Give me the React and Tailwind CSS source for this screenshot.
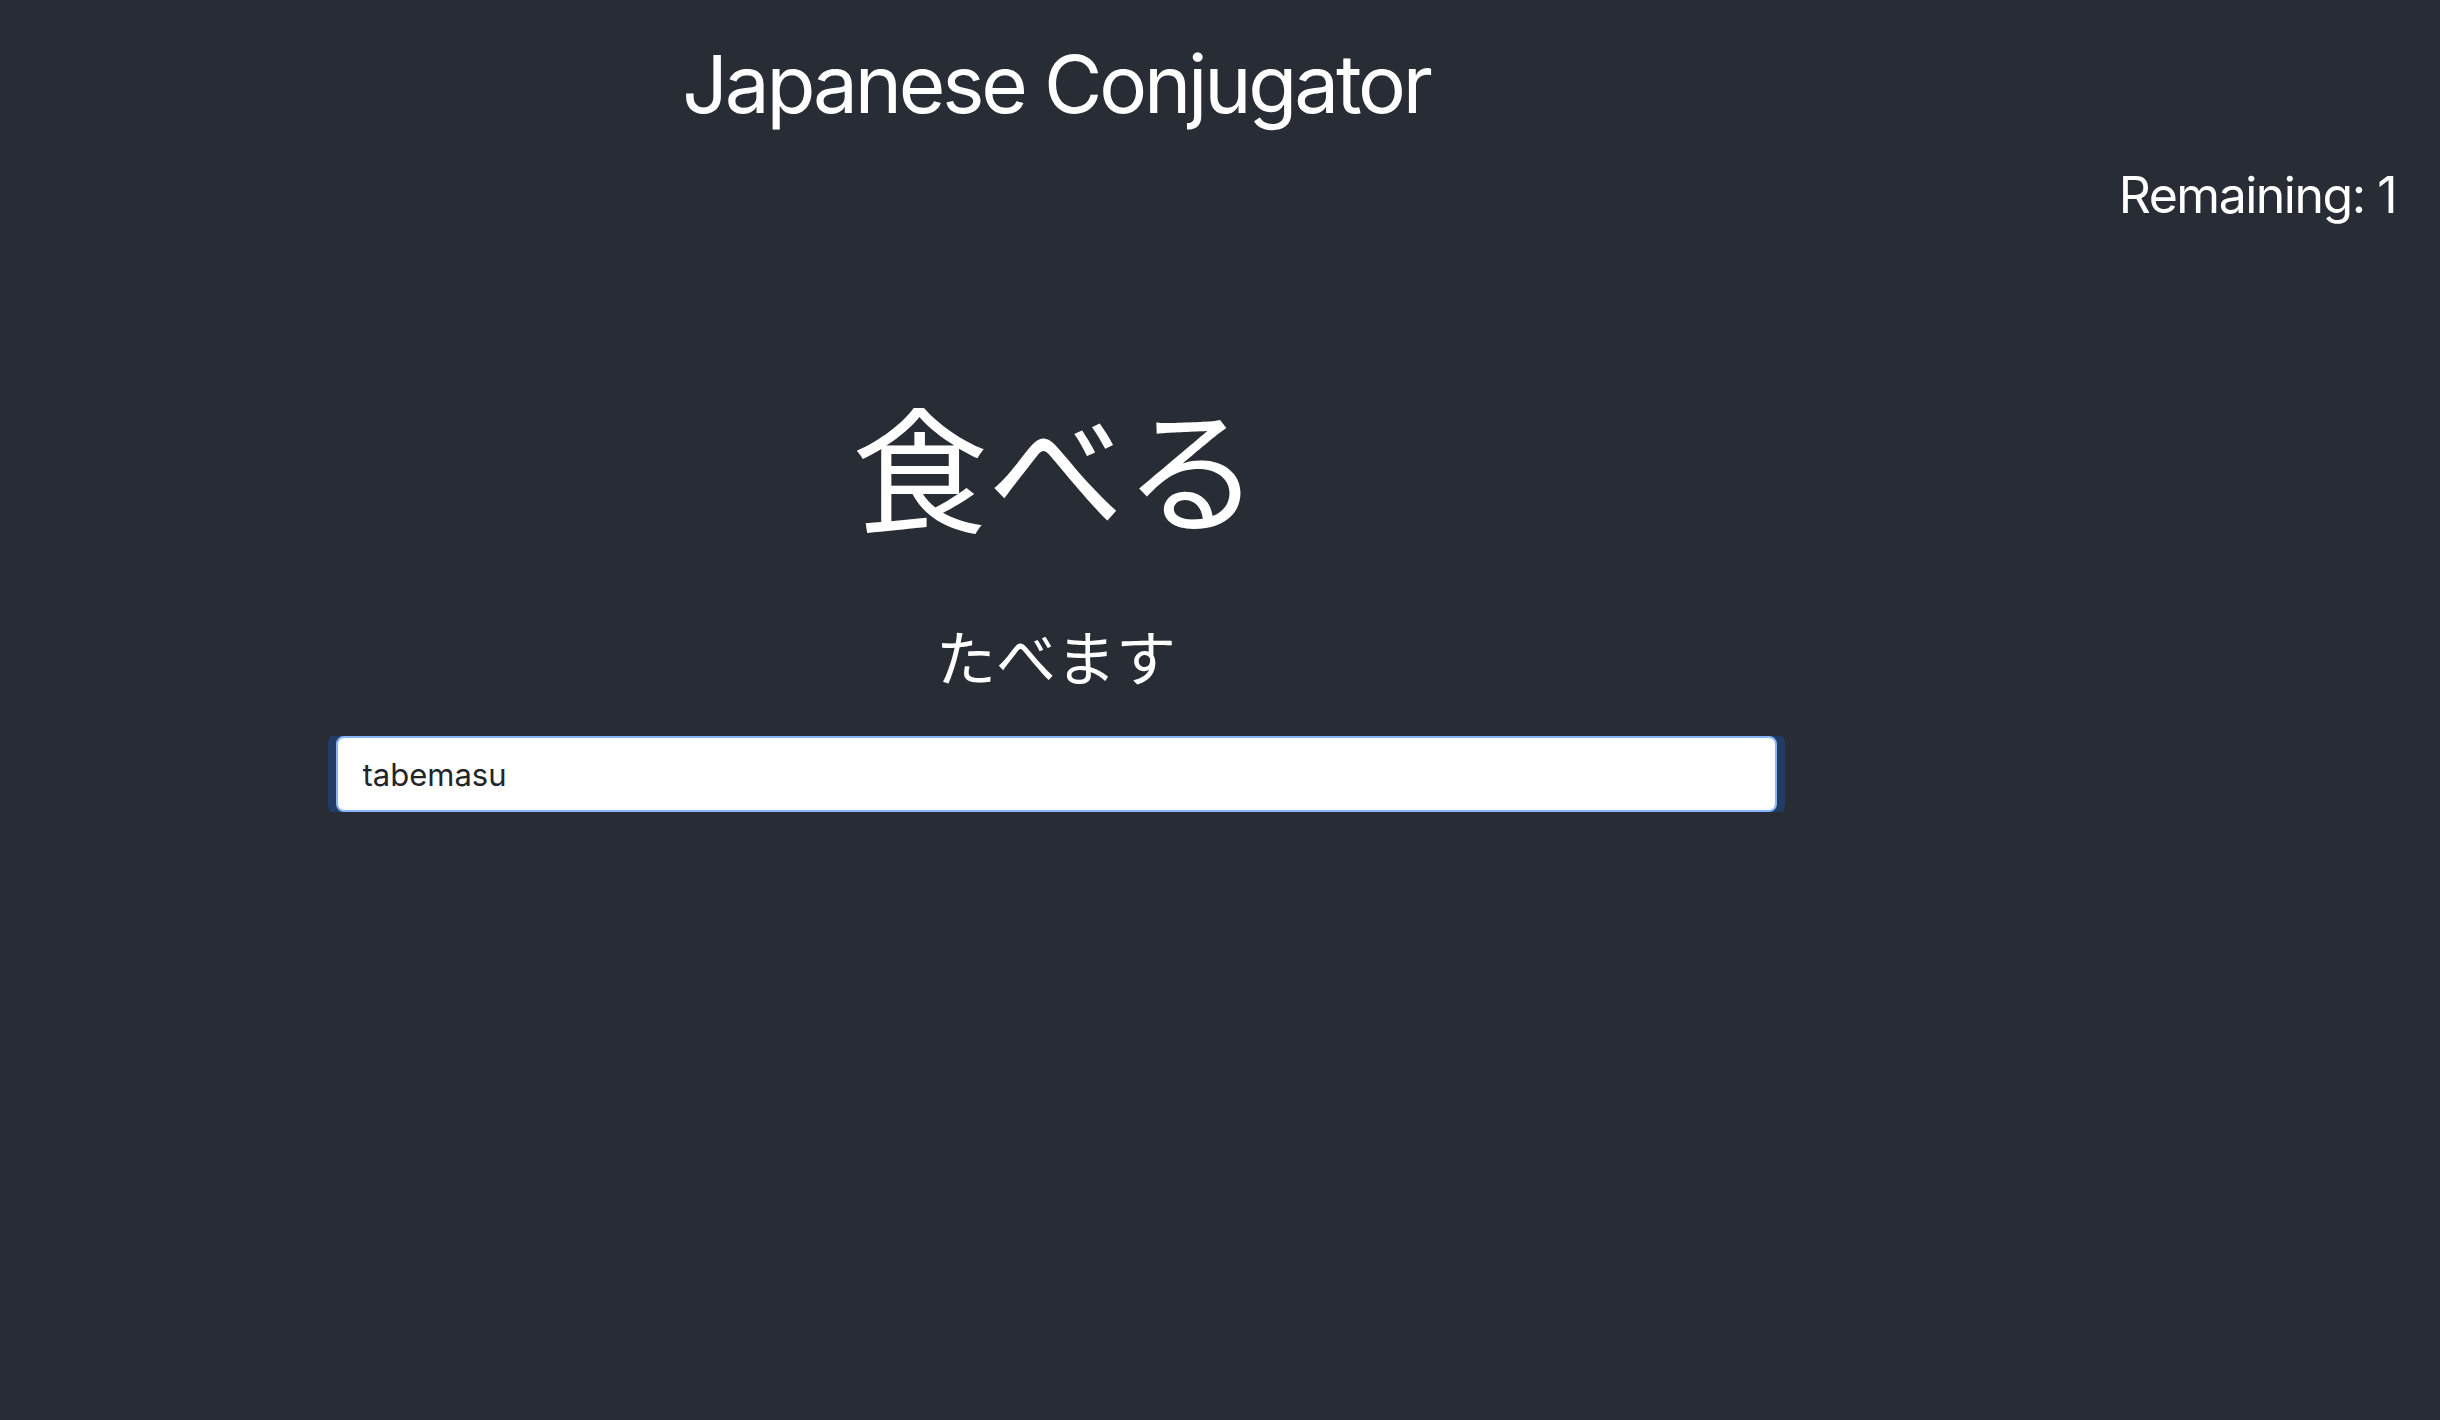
import React, { useState } from 'react';

export default function App() {
  const [answer, setAnswer] = useState('tabemasu');

  return (
    <div
      className="min-h-screen bg-[#282c34] text-white flex"
      style={{ fontFamily: 'Inter, "Noto Sans CJK JP", sans-serif' }}
    >
      <main className="flex-1 flex flex-col items-center">
        <h1 className="mt-[44px] text-[80px] leading-none font-normal tracking-[-0.04em]">Japanese Conjugator</h1>

        <div className="mt-[282px] text-[136px] leading-none">食べる</div>
        <div className="mt-[87px] text-[60px] leading-none">たべます</div>

        {/* focus ring is clipped top and bottom by the wrapper */}
        <div className="mt-[47px] w-[1457px] px-2 overflow-hidden">
          <input
            type="text"
            value={answer}
            onChange={(e) => setAnswer(e.target.value)}
            className="block w-full h-[76px] px-[25px] rounded-lg bg-white text-[#212529] text-[31px] border-2 border-[#86b7fe] shadow-[0_0_0_8px_rgba(13,110,253,0.25)] outline-none"
          />
        </div>
      </main>

      <aside className="w-[328px] pr-[44px] pt-[170px] flex justify-end">
        <div className="text-[50px] leading-none whitespace-nowrap tracking-[-0.03em]">Remaining: 1</div>
      </aside>
    </div>
  );
}
